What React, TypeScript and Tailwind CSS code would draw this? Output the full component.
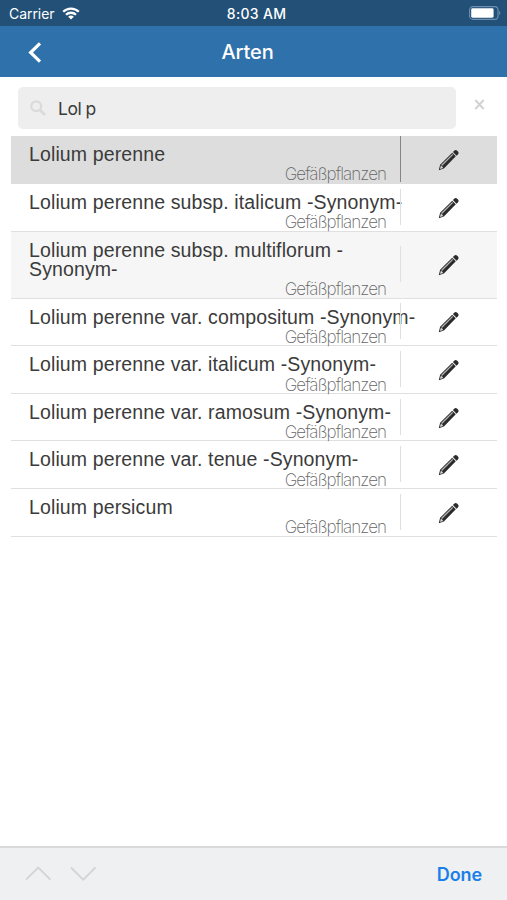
import { useState } from 'react';
import clsx from 'clsx';

const results = [
    { name: 'Lolium perenne', height: 'h-[48.5px]' },
    { name: 'Lolium perenne subsp. italicum -Synonym-', height: 'h-[47.6px]' },
    { name: 'Lolium perenne subsp. multiflorum -\nSynonym-', height: 'h-[67px]' },
    { name: 'Lolium perenne var. compositum -Synonym-', height: 'h-[47.6px]' },
    { name: 'Lolium perenne var. italicum -Synonym-', height: 'h-[47.6px]' },
    { name: 'Lolium perenne var. ramosum -Synonym-', height: 'h-[47.6px]' },
    { name: 'Lolium perenne var. tenue -Synonym-', height: 'h-[47.6px]' },
    { name: 'Lolium persicum', height: 'h-[47.6px]' },
];

const WifiIcon = () => (
    <svg width="18" height="13" viewBox="0 0 18 13" fill="none" stroke="#fff" strokeWidth="2.3">
        <path d="M1.2 4.8a11 11 0 0 1 15.6 0" />
        <path d="M4 7.8a7.1 7.1 0 0 1 10 0" />
        <path d="M9 12.6 6.2 9.8a3.9 3.9 0 0 1 5.6 0Z" fill="#fff" stroke="none" />
    </svg>
);

const BatteryIcon = () => (
    <svg width="32" height="14" viewBox="0 0 32 14">
        <rect x="0.6" y="0.6" width="28.4" height="12.8" rx="3.4" fill="none" stroke="#6f8fb2" strokeWidth="1.1" />
        <rect x="2.2" y="2.3" width="22.4" height="9.4" rx="1.4" fill="#fff" />
        <path d="M30.2 4.8c1.5.7 1.5 3.7 0 4.4Z" fill="#6f8fb2" />
    </svg>
);

const PencilIcon = () => (
    <svg width="22" height="22" viewBox="0 0 22 22">
        <path d="M.8 21.2 2.1 15.8 14.2 3.7l3.6 3.6L5.9 19.5Z" fill="#2b2b2b" />
        <path d="M3.1 16.1 14.3 4.9l.9.9L4 17Z" fill="#b5b5b5" />
        <path d="m2 19.9.8-3.2 1.4.8.9 1.4Z" fill="#d8d8d8" />
        <path d="m14.9 3.1 1.3-1.3c.9-.9 2.1-.9 3-.1l.8.8c.8.8.8 2.1-.1 3l-1.4 1.3Z" fill="#2b2b2b" />
    </svg>
);

const App = () => {
    const [query, setQuery] = useState('Lol p');
    const [selected, setSelected] = useState(0);

    return (
        <div className="flex h-[900px] w-[507px] flex-col overflow-hidden bg-white font-['Inter',sans-serif]">
            <div className="grid h-[25.5px] shrink-0 grid-cols-3 items-center bg-[#225077] pl-[9px] pr-[6px] pt-[1px] text-white">
                <div className="flex items-center gap-[7px] text-[14px] tracking-[-0.05px]">
                    <span>Carrier</span>
                    <WifiIcon />
                </div>
                <span className="pl-[3px] text-center text-[14px] font-medium tracking-[0.3px]">8:03 AM</span>
                <div className="flex justify-end">
                    <BatteryIcon />
                </div>
            </div>

            <div className="flex h-[51px] shrink-0 items-center bg-[#2f71aa] pl-[28px] pt-[2px] text-white">
                <button>
                    <svg width="14" height="21" viewBox="0 0 14 21" fill="none" stroke="#fff" strokeWidth="3.2">
                        <path d="M12 1.3 2.6 10.5 12 19.7" />
                    </svg>
                </button>
                <h1 className="flex-1 pr-[54px] text-center text-[20px] font-medium tracking-[-0.1px]">Arten</h1>
            </div>

            <div className="flex h-[59px] shrink-0 items-start pl-[18px] pr-[22px] pt-[10px]">
                <label className="flex h-[42.5px] w-[438px] items-center rounded-[5px] bg-[#eee] pl-[12px]">
                    <svg width="16" height="16" viewBox="0 0 16 16" fill="none" stroke="#dadada" strokeWidth="2.2">
                        <circle cx="6.2" cy="6.2" r="4.9" />
                        <path d="m10 10 5 5" strokeWidth="2.6" />
                    </svg>
                    <input
                        className="ml-[12px] mt-[2px] w-[380px] bg-transparent text-[17.5px] tracking-[-0.5px] text-[#3b3b3b] outline-none"
                        value={query}
                        onChange={(e) => setQuery(e.target.value)}
                    />
                </label>
                <button className="ml-auto mt-[12px]" onClick={() => setQuery('')}>
                    <svg width="11" height="11" viewBox="0 0 11 11" stroke="#d2d2d2" strokeWidth="2">
                        <path d="m1.3 1 8.4 9M9.7 1l-8.4 9" />
                    </svg>
                </button>
            </div>

            <div className="ml-[11px] mr-[10px] flex flex-col">
                {results.map((item, index) => {
                    const active = index === selected;
                    return (
                        <div
                            key={item.name}
                            onClick={() => setSelected(index)}
                            className={clsx(
                                'flex shrink-0 border-b',
                                item.height,
                                active ? 'border-[#ddd] bg-[#ddd]' : 'border-[#e0e0e0]',
                                index === 2 && 'bg-[#f6f6f6]',
                            )}
                        >
                            <div className="flex w-[389px] shrink-0 flex-col justify-between pb-[0.8px] pl-[18px] pr-[14px] pt-[9.1px]">
                                <span className="whitespace-pre font-['Liberation_Sans',sans-serif] text-[19.5px] leading-[19.3px] tracking-[0.12px] text-[#3b3b3b]">
                                    {item.name}
                                </span>
                                <span className="text-right text-[17px] font-extralight leading-[20px] tracking-[-0.95px] text-[#666]">
                                    Gefäßpflanzen
                                </span>
                            </div>
                            {/* relative keeps the divider above long names */}
                            <div
                                className={clsx(
                                    'relative w-px shrink-0 self-center',
                                    active ? 'h-[46px] bg-[#858585]' : 'mb-[1px] h-[36px] bg-[#dfdfdf]',
                                )}
                            />
                            <button className="flex flex-1 items-center justify-center pr-[1px] pt-[1px]">
                                <PencilIcon />
                            </button>
                        </div>
                    );
                })}
            </div>

            <div className="mt-auto flex h-[54px] shrink-0 items-center border-t-2 border-[#d9dadb] bg-[#eff0f2] px-[25px]">
                <svg width="72" height="15" viewBox="0 0 72 15" fill="none" stroke="#d2d4d6" strokeWidth="1.8" className="-mt-[2px]">
                    <path d="M1 13.7 13.2 1.5l12.2 12.2" />
                    <path d="m46 1.5 12.2 12.2L70.4 1.5" />
                </svg>
                <button className="ml-auto text-[18px] font-semibold tracking-[-0.1px] text-[#1a7fe8]">Done</button>
            </div>
        </div>
    );
};

export default App;
